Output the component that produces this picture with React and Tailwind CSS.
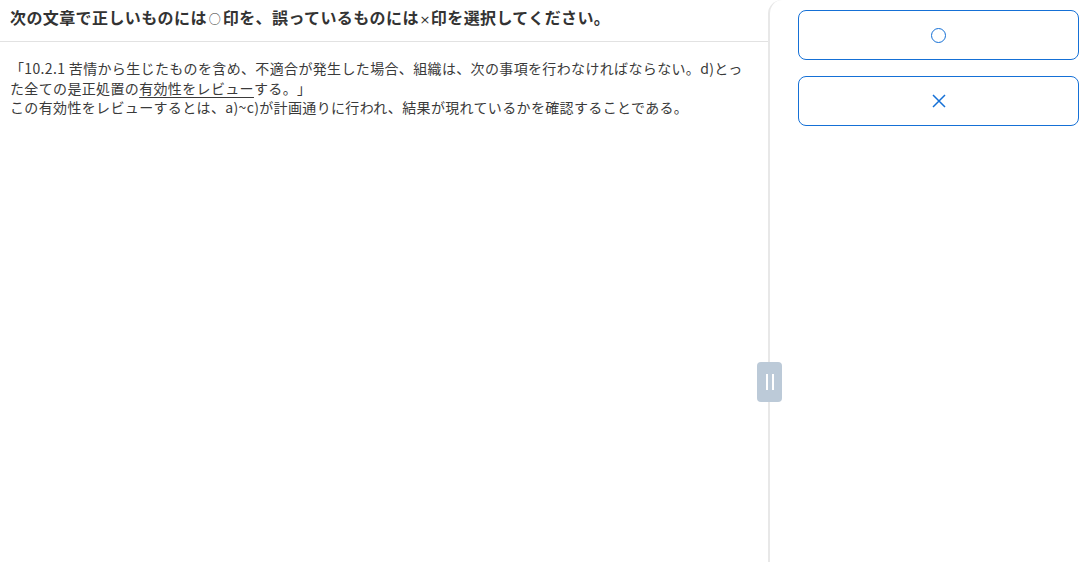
import React from "react";

export default function App() {
  const font = { fontFamily: '"Meiryo", "Noto Sans CJK JP", "Noto Sans", sans-serif' };
  return (
    <div className="relative flex h-[562px] w-[1091px] overflow-hidden bg-white text-[#333] [text-spacing-trim:space-all]" style={font}>
      <div className="flex w-[768px] flex-col">
        <div className="flex h-[42px] items-center border-b border-[#e2e2e2] px-[10px] pb-[6px]">
          <h1 className="whitespace-nowrap text-[16px] font-bold tracking-[0.4px] text-[#333]">
            次の文章で正しいものには<span className="inline-block w-[16px] text-center text-[12px] font-normal tracking-normal">○</span>印を、誤っているものには<span className="inline-block w-[12px] text-center text-[13px] font-normal tracking-normal" style={{ fontFamily: '"DejaVu Sans", sans-serif' }}>×</span>印を選択してください。
          </h1>
        </div>
        <div className="px-[10px] pt-[17px] text-[14px] leading-[19.7px] tracking-[0.35px] text-[#3a3a3a]">
          <p className="whitespace-nowrap">「10.2.1 苦情から生じたものを含め、不適合が発生した場合、組織は、次の事項を行わなければならない。d)とっ</p>
          <p className="whitespace-nowrap">た全ての是正処置の<span className="underline underline-offset-[3px]">有効性をレビュー</span>する。」</p>
          <p className="whitespace-nowrap">この有効性をレビューするとは、a)~c)が計画通りに行われ、結果が現れているかを確認することである。</p>
        </div>
      </div>
      <div className="flex flex-1 flex-col gap-[16px] rounded-tl-[14px] border-l-2 border-[#e8e8e8] pl-[28px] pr-[12px] pt-[10px]">
        <button className="flex h-[50px] w-[281px] items-center justify-center rounded-[8px] border border-[#1570d6] bg-white">
          <span className="block h-[15px] w-[15px] rounded-full border-[1.5px] border-[#1570d6]"></span>
        </button>
        <button className="flex h-[50px] w-[281px] items-center justify-center rounded-[8px] border border-[#1570d6] bg-white">
          <svg width="14" height="14" viewBox="0 0 14 14" fill="none" stroke="#1570d6" strokeWidth="1.5">
            <path d="M1 1 L13 13 M13 1 L1 13" />
          </svg>
        </button>
      </div>
      <div className="absolute left-[757px] top-[362px] flex h-[40px] w-[25px] items-center justify-center gap-[4px] rounded-[4px] bg-[#bccad8]">
        <span className="block h-[16px] w-[2px] bg-white"></span>
        <span className="block h-[16px] w-[2px] bg-white"></span>
      </div>
    </div>
  );
}
